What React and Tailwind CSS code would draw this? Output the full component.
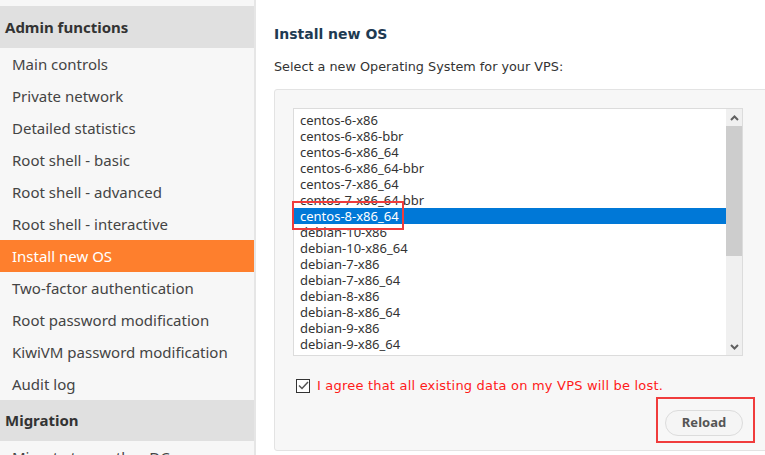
import React from "react";

const items1 = [
  "Main controls",
  "Private network",
  "Detailed statistics",
  "Root shell - basic",
  "Root shell - advanced",
  "Root shell - interactive",
  "Install new OS",
  "Two-factor authentication",
  "Root password modification",
  "KiwiVM password modification",
  "Audit log",
];

const osList = [
  "centos-6-x86",
  "centos-6-x86-bbr",
  "centos-6-x86_64",
  "centos-6-x86_64-bbr",
  "centos-7-x86_64",
  "centos-7-x86_64-bbr",
  "centos-8-x86_64",
  "debian-10-x86",
  "debian-10-x86_64",
  "debian-7-x86",
  "debian-7-x86_64",
  "debian-8-x86",
  "debian-8-x86_64",
  "debian-9-x86",
  "debian-9-x86_64",
];

export default function App() {
  return (
    <div className="flex h-[455px] w-[765px] overflow-hidden bg-white">
      <aside
        className="flex h-[455px] w-[256px] shrink-0 flex-col overflow-hidden border-r-2 border-[#e6e6e6] bg-[#f7f7f7] pt-[6px] text-[15px] text-[#333]"
        style={{ fontFamily: '"Noto Sans", "Open Sans", sans-serif' }}
      >
        <div className="flex h-[42px] shrink-0 items-center bg-[#e0e0e0] pl-[5px] font-bold text-[#333]">
          Admin functions
        </div>
        {items1.map((t) => (
          <div
            key={t}
            className={
              "flex h-[32px] shrink-0 items-center pl-[12px] " +
              (t === "Install new OS" ? "bg-[#fe7f2d] text-white" : "text-[#444]")
            }
          >
            {t}
          </div>
        ))}
        <div className="flex h-[41px] shrink-0 items-center bg-[#e0e0e0] pl-[5px] font-bold text-[#333]">
          Migration
        </div>
        <div className="flex h-[32px] shrink-0 items-center pl-[12px] text-[#444]">
          Migrate to another DC
        </div>
      </aside>
      <main
        className="relative flex-1 pl-[18px] pt-[24px]"
        style={{ fontFamily: '"DejaVu Sans", Verdana, sans-serif' }}
      >
        <h1 className="text-[14px] font-bold leading-[20px] text-[#1e3a52]">Install new OS</h1>
        <p className="mt-[13px] text-[12.8px] leading-[20px] text-[#333]">
          Select a new Operating System for your VPS:
        </p>
        <div className="mt-[12px] h-[362px] w-[500px] rounded-[3px] border border-[#e3e3e3] bg-[#f7f7f7] pl-[18px] pt-[18px]">
          <div className="relative flex h-[248px] w-[450px] border border-[#dcdcdc] bg-white">
            <div
              className="flex-1 overflow-hidden pt-[3px] text-[13px] text-[#333]"
              style={{ fontFamily: '"Noto Sans", "Open Sans", sans-serif' }}
            >
              {osList.map((o) => (
                <div
                  key={o}
                  className={
                    "flex h-[16px] items-center pl-[6px] leading-[16px] " +
                    (o === "centos-8-x86_64" ? "bg-[#0078d7] text-white" : "")
                  }
                >
                  {o}
                </div>
              ))}
            </div>
            <div className="flex w-[16px] flex-col bg-[#f0f0f0]">
              <div className="flex h-[17px] items-center justify-center">
                <svg width="9" height="6" viewBox="0 0 9 6">
                  <path d="M1 5 L4.5 1.5 L8 5" stroke="#606060" strokeWidth="2" fill="none" />
                </svg>
              </div>
              <div className="h-[130px] bg-[#cdcdcd]" />
              <div className="flex-1" />
              <div className="flex h-[17px] items-center justify-center">
                <svg width="9" height="6" viewBox="0 0 9 6">
                  <path d="M1 1 L4.5 4.5 L8 1" stroke="#606060" strokeWidth="2" fill="none" />
                </svg>
              </div>
            </div>
            <div className="pointer-events-none absolute left-[-2px] top-[92px] h-[29px] w-[112px] border-2 border-[#f03c3c]" />
          </div>
          <div className="mt-[20px] flex items-center pl-[3px]">
            <div className="flex h-[14px] w-[14px] items-center justify-center border border-[#333] bg-white">
              <svg width="11" height="9" viewBox="0 0 11 9">
                <path d="M1 4.5 L4 7.5 L10 1" stroke="#555" strokeWidth="1.5" fill="none" />
              </svg>
            </div>
            <span className="ml-[7px] text-[13px] tracking-[0.2px] text-[#ff1a1a]">
              I agree that all existing data on my VPS will be lost.
            </span>
          </div>
          <div className="relative mt-[14px] flex w-[450px] justify-end">
            <button
              className="h-[26px] w-[78px] rounded-full border border-[#dcdcdc] bg-[#f5f5f5] text-[13px] font-bold text-[#555]"
              style={{ fontFamily: '"Noto Sans", "Open Sans", sans-serif' }}
            >
              Reload
            </button>
            <div className="pointer-events-none absolute right-[-12px] top-[-13px] h-[46px] w-[99px] border-2 border-[#f03c3c]" />
          </div>
        </div>
      </main>
    </div>
  );
}
